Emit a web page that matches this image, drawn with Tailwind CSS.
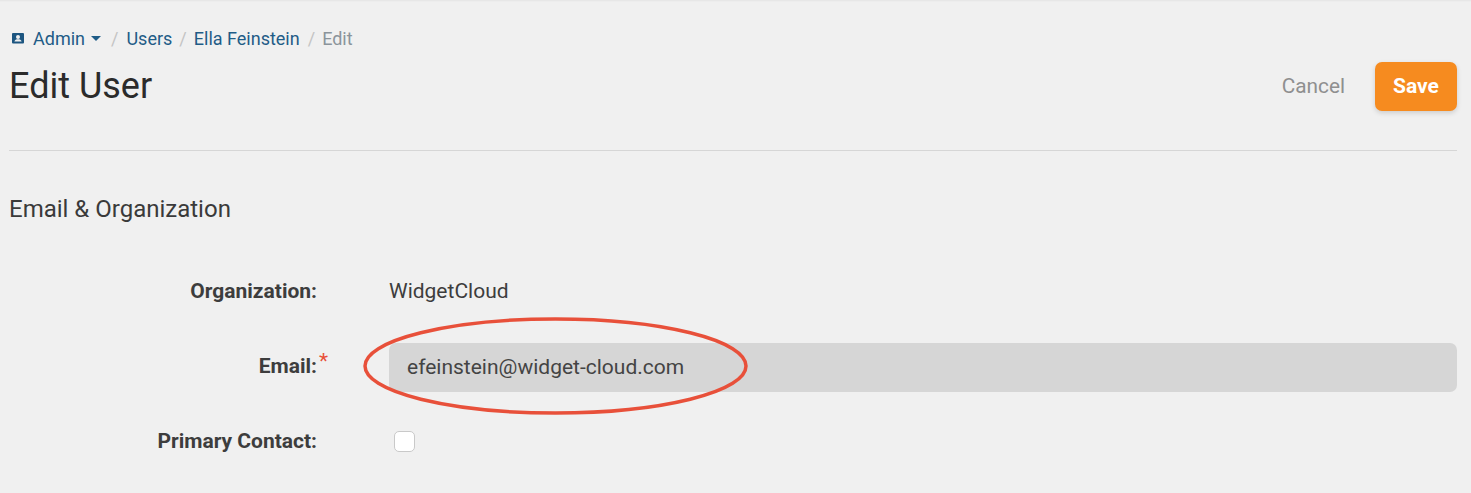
<!DOCTYPE html>
<html lang="en">
<head>
  <meta charset="UTF-8">
  <title>Edit User</title>
  <script src="https://cdn.jsdelivr.net/npm/@tailwindcss/browser@4"></script>
</head>
<body class="bg-[#f0f0f0] h-[493px] overflow-hidden font-[Roboto,sans-serif] text-[#333] shadow-[inset_0_3px_2px_-2px_rgba(0,0,0,0.05)]">
  <div class="pl-[9px] pr-[14px] pt-[27px]">
    <!-- Breadcrumb -->
    <nav class="flex items-center h-[22px] text-[18px] text-[#1f5c87]">
      <svg class="w-[14px] h-[14px] ml-[2px] mr-[8px]" viewBox="0 0 14 14"><rect x="1" y="2" width="12" height="10.5" rx="1" fill="#1c5580"/><circle cx="7" cy="6" r="2" fill="#f0f0f0"/><path d="M3.4 10.6c.4-1.7 1.8-2.3 3.6-2.3s3.2.6 3.6 2.3z" fill="#f0f0f0"/></svg>
      <span>Admin</span>
      <span class="ml-[6px] w-0 h-0 border-x-[5px] border-x-transparent border-t-[5px] border-t-[#1f5c87]"></span>
      <span class="ml-[10px] mr-[8px] text-[#c4c4c4]">/</span>
      <span>Users</span>
      <span class="mx-[7px] text-[#c4c4c4]">/</span>
      <span>Ella Feinstein</span>
      <span class="ml-[8px] mr-[7px] text-[#c4c4c4]">/</span>
      <span class="text-[#8b949b]">Edit</span>
    </nav>
    <!-- Header -->
    <div class="flex items-start justify-between h-[102px] border-b border-[#d6d6d6]">
      <h1 class="text-[36px] leading-[44px] mt-[15px] text-[#2b2b2b]">Edit User</h1>
      <div class="flex items-center mt-[13px]">
        <span class="text-[#8f8f8f] text-[20.8px] mr-[30px]">Cancel</span>
        <button class="w-[82px] h-[49px] rounded-[7px] bg-[#f68b1f] text-white font-bold text-[21px] shadow-[0_2px_5px_rgba(0,0,0,0.15)]">Save</button>
      </div>
    </div>
    <h2 class="text-[24px] leading-[30px] mt-[43px] text-[#3a3a3a]">Email &amp; Organization</h2>
    <!-- Form -->
    <div class="mt-[44px] grid grid-cols-[308px_1fr] gap-x-[72px] items-center text-[21px]">
      <div class="text-right font-bold text-[#3d3d3d] h-[46px] leading-[46px]">Organization:</div>
      <div class="h-[46px] leading-[46px] text-[#3d3d3d]">WidgetCloud</div>
      <div class="relative text-right font-bold text-[#3d3d3d] mt-[29px] pb-[2px]">Email:<span class="absolute right-[-11px] top-[-5px] text-[#e8503a] font-normal">*</span></div>
      <div class="mt-[29px] h-[49px] leading-[49px] rounded-[7px] bg-[#d6d6d6] pl-[18px] text-[#444]">efeinstein@widget-cloud.com</div>
      <div class="text-right font-bold text-[#3d3d3d] mt-[26px] h-[46px] leading-[46px]">Primary Contact:</div>
      <div class="mt-[26px] pl-[5px]"><div class="w-[21px] h-[21px] rounded-[5px] bg-white border border-[#c9c9c9]"></div></div>
    </div>
  </div>
  <!-- Red annotation ellipse -->
  <svg class="absolute left-[360px] top-[314px]" width="392" height="104" viewBox="0 0 392 104"><ellipse cx="195.5" cy="52" rx="190.5" ry="47" fill="none" stroke="#e8503a" stroke-width="3.5"/></svg>
</body>
</html>
